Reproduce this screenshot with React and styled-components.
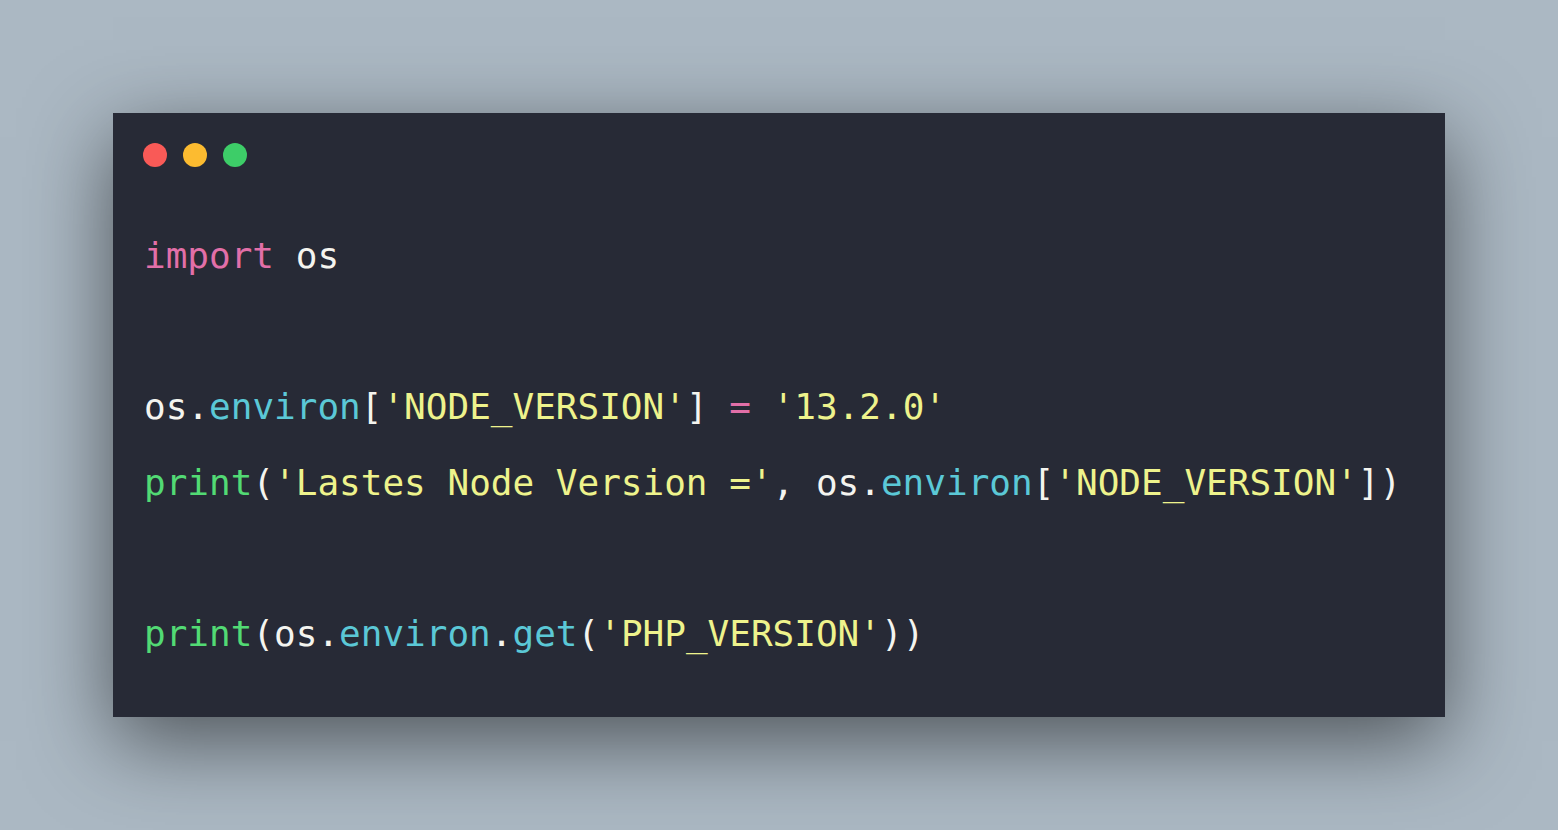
import React from 'react';
import styled, { createGlobalStyle } from 'styled-components';

const GlobalStyle = createGlobalStyle`
    html, body {
        margin: 0;
        padding: 0;
        background: #abb8c3;
    }
`;

const colors = {
    keyword: '#e26fa8',
    attr: '#5bc8d6',
    string: '#eef38c',
    func: '#52da74',
    plain: '#f4f4ef',
};

const Page = styled.div`
    width: 1558px;
    height: 830px;
    box-sizing: border-box;
    padding: 113px 113px 0 113px;
    background: #abb8c3;
`;

const Window = styled.div`
    width: 1332px;
    height: 604px;
    box-sizing: border-box;
    padding: 30px 30px 0 30px;
    background: #272a36;
    box-shadow: 0 24px 80px rgba(0, 0, 0, 0.55);
`;

const Dots = styled.div`
    display: flex;
    gap: 16px;
`;

const Dot = styled.span`
    width: 24px;
    height: 24px;
    border-radius: 50%;
    background: ${(p) => p.color};
`;

const Code = styled.pre`
    margin: 51px 0 0 1px;
    font-family: "DejaVu Sans Mono", monospace;
    font-size: 36px;
    line-height: 75.6px;
    color: ${colors.plain};
`;

const Line = styled.div`
    height: 75.6px;
    white-space: pre;
`;

const Tok = styled.span`
    color: ${(p) => colors[p.kind] || colors.plain};
`;

const rows = [
    [['keyword', 'import'], ['plain', ' os']],
    [],
    [
        ['plain', 'os.'], ['attr', 'environ'], ['plain', '['], ['string', "'NODE_VERSION'"],
        ['plain', '] '], ['keyword', '='], ['plain', ' '], ['string', "'13.2.0'"],
    ],
    [
        ['func', 'print'], ['plain', '('], ['string', "'Lastes Node Version ='"], ['plain', ', os.'],
        ['attr', 'environ'], ['plain', '['], ['string', "'NODE_VERSION'"], ['plain', '])'],
    ],
    [],
    [
        ['func', 'print'], ['plain', '(os.'], ['attr', 'environ'], ['plain', '.'], ['attr', 'get'],
        ['plain', '('], ['string', "'PHP_VERSION'"], ['plain', '))'],
    ],
];

const App = () => {
    return <Page>
        <GlobalStyle />
        <Window>
            <Dots>
                <Dot color='#f95a57' />
                <Dot color='#fcbb30' />
                <Dot color='#3dcd68' />
            </Dots>
            <Code>
                {rows.map((toks, i) => (
                    <Line key={i}>
                        {toks.length === 0 ? ' ' : toks.map(([kind, text], j) => (
                            <Tok key={j} kind={kind}>{text}</Tok>
                        ))}
                    </Line>
                ))}
            </Code>
        </Window>
    </Page>;
};

export default App;
